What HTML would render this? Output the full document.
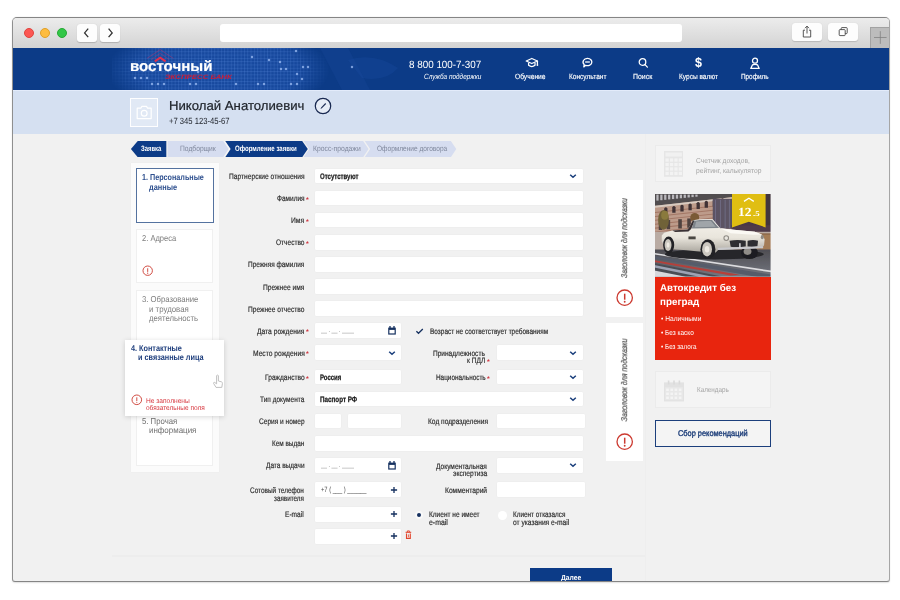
<!DOCTYPE html>
<html lang="ru">
<head>
<meta charset="utf-8">
<title>Восточный экспресс банк — Оформление заявки</title>
<style>
html,body{margin:0;padding:0;}
body{width:900px;height:600px;background:#fff;position:relative;overflow:hidden;font-family:'Liberation Sans',sans-serif;}
div,svg,span.t{position:absolute;box-sizing:border-box;}
span.t{white-space:nowrap;display:block;transform-origin:0 50%;text-rendering:geometricPrecision;}
.win{overflow:hidden;}
.inp{background:#fff;border-radius:1px;}
.card{background:#fff;}

</style>
</head>
<body>
<div class="win" style="left:12px;top:17px;width:878px;height:565px;border:1px solid #8f8f8f;border-top-color:#858585;border-bottom-color:#858585;border-right-color:#a6a6a6;border-radius:5px 5px 3px 3px;background:#f1f1f1;box-shadow:0 0.5px 1.5px rgba(0,0,0,.12);">
<div style="left:-13px;top:-18px;width:900px;height:600px;">
<div style="left:0.00px;top:18.00px;width:900.00px;height:30.00px;background:linear-gradient(#ececec,#e2e2e2 40%,#d3d3d3);"></div>
<div style="left:24.00px;top:28.00px;width:10.00px;height:10.00px;border-radius:50%;background:#fc5753;border:0.5px solid #e0443e;"></div>
<div style="left:40.30px;top:28.00px;width:10.00px;height:10.00px;border-radius:50%;background:#fdbc40;border:0.5px solid #e0a028;"></div>
<div style="left:56.70px;top:28.00px;width:10.00px;height:10.00px;border-radius:50%;background:#33c748;border:0.5px solid #27aa35;"></div>
<div style="left:76.70px;top:24.00px;width:20.00px;height:17.70px;background:#fdfdfd;border-radius:3px;box-shadow:0 0.5px 1px rgba(0,0,0,.18);"></div>
<div style="left:99.50px;top:24.00px;width:20.20px;height:17.70px;background:#fdfdfd;border-radius:3px;box-shadow:0 0.5px 1px rgba(0,0,0,.18);"></div>
<svg style="left:76.70px;top:24.00px;" width="20.00" height="17.70" viewBox="0 0 20 17.7"><path d="M11.2 4.6 L7.6 8.9 L11.2 13.2" fill="none" stroke="#333" stroke-width="1.3"/></svg>
<svg style="left:99.50px;top:24.00px;" width="20.20" height="17.70" viewBox="0 0 20.2 17.7"><path d="M8.6 4.6 L12.2 8.9 L8.6 13.2" fill="none" stroke="#333" stroke-width="1.3"/></svg>
<div style="left:219.70px;top:24.20px;width:462.80px;height:17.50px;background:#fff;border-radius:3px;"></div>
<div style="left:791.70px;top:23.00px;width:30.00px;height:17.70px;background:#fdfdfd;border-radius:3px;box-shadow:0 0.5px 1px rgba(0,0,0,.15);"></div>
<div style="left:828.30px;top:23.00px;width:30.00px;height:17.70px;background:#fdfdfd;border-radius:3px;box-shadow:0 0.5px 1px rgba(0,0,0,.15);"></div>
<svg style="left:791.70px;top:23.00px;" width="30.00" height="17.50" viewBox="0 0 30 17.5"><g fill="none" stroke="#444" stroke-width="0.9"><path d="M13 7.2 H11.3 V14 H18.7 V7.2 H17"/><path d="M15 10.5 V3.2 M13 5.2 L15 3.1 L17 5.2"/></g></svg>
<svg style="left:828.30px;top:23.00px;" width="30.00" height="17.50" viewBox="0 0 30 17.5"><g fill="none" stroke="#444" stroke-width="0.9"><rect x="11.2" y="6.6" width="6" height="6" rx="0.8"/><path d="M13.2 6.6 V5.4 Q13.2 4.6 14 4.6 H18.4 Q19.2 4.6 19.2 5.4 V9.8 Q19.2 10.6 18.4 10.6 H17.2"/></g></svg>
<div style="left:870.00px;top:27.20px;width:20.00px;height:21.30px;background:#bcbcbc;border:1px solid #a2a2a2;border-bottom:none;"></div>
<svg style="left:870.00px;top:27.20px;" width="20.00" height="20.80" viewBox="0 0 20 20.8"><path d="M10.3 4.2 V16.8 M4 10.5 H16.6" fill="none" stroke="#7e7e7e" stroke-width="0.75"/></svg>
<div style="left:0.00px;top:48.00px;width:900.00px;height:42.00px;background:#0c3b87;"></div>
<svg style="left:112.00px;top:48.00px;" width="300.00" height="42.00" viewBox="0 0 300 42"><defs>
<pattern id="hg" width="3.3" height="3.3" patternUnits="userSpaceOnUse"><path d="M0 0.5 H3.3 M0.5 0 V3.3" stroke="#5f8fe0" stroke-width="0.45" fill="none" opacity="0.5"/></pattern>
<radialGradient id="hr" cx="0.5" cy="0.5" r="0.5"><stop offset="0" stop-color="#fff" stop-opacity="1"/><stop offset="0.72" stop-color="#fff" stop-opacity="0.85"/><stop offset="1" stop-color="#fff" stop-opacity="0"/></radialGradient>
<mask id="hm"><ellipse cx="106" cy="22" rx="112" ry="46" fill="url(#hr)"/></mask>
<filter id="hb" x="-50%" y="-50%" width="200%" height="200%"><feGaussianBlur stdDeviation="0.45"/></filter>
</defs>
<g mask="url(#hm)"><rect x="0" y="0" width="230" height="42" fill="#194ba1"/><rect x="0" y="0" width="230" height="42" fill="url(#hg)"/></g>
<path d="M208 0 L236 0 L258 42 L230 42 Z" fill="#1a4a9c" opacity="0.3"/>
<path d="M236 12 Q262 4 286 20 Q274 34 250 30 Z" fill="#1d4fa4" opacity="0.28"/>
<g fill="#9dbdf5" opacity="0.75" filter="url(#hb)"><circle cx="23" cy="30" r="1.25"/><circle cx="29" cy="30" r="1.25"/><circle cx="35" cy="30" r="1.25"/><circle cx="40" cy="36" r="1.25"/><circle cx="46" cy="36" r="1.25"/><circle cx="52" cy="36" r="1.25"/><circle cx="78" cy="36" r="1.25"/><circle cx="84" cy="36" r="1.25"/><circle cx="124" cy="36" r="1.25"/><circle cx="86" cy="24" r="1.25"/><circle cx="140" cy="9" r="1.25"/><circle cx="146" cy="36" r="1.25"/><circle cx="152" cy="36" r="1.25"/><circle cx="157" cy="12" r="1.25"/><circle cx="168" cy="14" r="1.25"/><circle cx="169" cy="21" r="1.25"/><circle cx="174" cy="21" r="1.25"/><circle cx="179" cy="36" r="1.25"/><circle cx="185" cy="36" r="1.25"/><circle cx="184" cy="3" r="1.25"/><circle cx="185" cy="26" r="1.25"/><circle cx="190" cy="31" r="1.25"/><circle cx="191" cy="19" r="1.25"/><circle cx="196" cy="19" r="1.25"/><circle cx="240" cy="19" r="1.25"/></g></svg>
<span class="t" style="left:129.80px;top:57.30px;font-size:14.8px;line-height:20px;color:#fff;font-weight:bold;transform:scaleX(1.0177);-webkit-text-stroke:0.2px #fff;">восточный</span>
<span class="t" style="left:165.00px;top:73.30px;font-size:6.3px;line-height:9px;color:#cc1d38;font-weight:bold;font-style:italic;transform:scaleX(1.2410);">ЭКСПРЕСС БАНК</span>
<svg style="left:140.00px;top:48.00px;" width="42.00" height="16.00" viewBox="0 0 42 16"><g fill="none" stroke-linejoin="miter"><path d="M7 10.4 L20.2 1.6 L33.4 10.4" stroke="#c0306a" stroke-width="1" opacity="0.45"/><path d="M11 11.6 L20.2 5.4 L29.4 11.6" stroke="#c0306a" stroke-width="1" opacity="0.4"/><path d="M14.8 13.4 L20.2 9.7 L25.6 13.4" stroke="#e2304c" stroke-width="2.1"/></g></svg>
<span class="t" style="left:409.00px;top:58.30px;font-size:10.5px;line-height:14px;color:#fff;transform:scaleX(0.9380);">8 800 100-7-307</span>
<span class="t" style="left:424.00px;top:72.30px;font-size:7.6px;line-height:10px;color:#fff;font-style:italic;transform:scaleX(0.8477);">Служба поддержки</span>
<span class="t" style="left:515.30px;top:72.30px;font-size:7.6px;line-height:10px;color:#fff;transform:scaleX(0.8781);-webkit-text-stroke:0.15px #fff;">Обучение</span>
<span class="t" style="left:568.80px;top:72.30px;font-size:7.6px;line-height:10px;color:#fff;transform:scaleX(0.8626);-webkit-text-stroke:0.15px #fff;">Консультант</span>
<span class="t" style="left:633.00px;top:72.30px;font-size:7.6px;line-height:10px;color:#fff;transform:scaleX(0.9122);-webkit-text-stroke:0.15px #fff;">Поиск</span>
<span class="t" style="left:678.80px;top:72.30px;font-size:7.6px;line-height:10px;color:#fff;transform:scaleX(0.8601);-webkit-text-stroke:0.15px #fff;">Курсы валют</span>
<span class="t" style="left:740.50px;top:72.30px;font-size:7.6px;line-height:10px;color:#fff;transform:scaleX(0.8385);-webkit-text-stroke:0.15px #fff;">Профиль</span>
<svg style="left:524.50px;top:57.00px;" width="14.00" height="12.00" viewBox="0 0 14 12"><g fill="none" stroke="#fff" stroke-width="1.3" stroke-linejoin="round" stroke-linecap="round" stroke-width="1.45"><path d="M1.2 4 L6.8 1.5 L12.4 4 L6.8 6.5 Z"/><path d="M3.6 6.2 V8.3 Q6.8 10.9 10 8.3 V6.2"/><path d="M12.4 4.2 V7"/></g><circle cx="12.4" cy="8" r="0.9" fill="#fff"/></svg>
<svg style="left:580.50px;top:57.00px;" width="14.00" height="12.00" viewBox="0 0 14 12"><g fill="none" stroke="#fff" stroke-width="1.3" stroke-linejoin="round" stroke-linecap="round" stroke-width="1.45"><path d="M6.5 1.3 A4.3 3.7 0 1 1 4.6 8.3 L2.8 9.9 L3.2 7.5 A4.3 3.7 0 0 1 6.5 1.3 Z"/></g><path d="M4.6 5 H8.4" stroke="#fff" stroke-width="1.3" stroke-linecap="round" fill="none" opacity="0.85"/></svg>
<svg style="left:636.80px;top:57.00px;" width="14.00" height="12.00" viewBox="0 0 14 12"><g fill="none" stroke="#fff" stroke-width="1.3" stroke-linejoin="round" stroke-linecap="round" stroke-width="1.45"><circle cx="5.5" cy="5" r="3.3"/><path d="M8 7.6 L10.4 10.1"/></g></svg>
<span class="t" style="left:0.00px;top:54.30px;font-size:13.5px;line-height:18px;color:#fff;font-weight:bold;left:695.1px;transform:scaleX(0.93);">$</span>
<svg style="left:747.50px;top:56.60px;" width="14.00" height="12.50" viewBox="0 0 14 12.5"><g fill="none" stroke="#fff" stroke-width="1.3" stroke-linejoin="round" stroke-linecap="round" stroke-width="1.35"><circle cx="7" cy="3.7" r="2.5"/><path d="M2.8 11.4 L4.4 7.9 Q7 6.7 9.6 7.9 L11.2 11.4 Z"/></g></svg>
<div style="left:0.00px;top:90.00px;width:900.00px;height:43.60px;background:#d5e0f1;"></div>
<div style="left:0.00px;top:90.00px;width:900.00px;height:1.20px;background:#e3ebfa;"></div>
<div style="left:130.20px;top:98.20px;width:28.20px;height:28.90px;border:1.5px solid rgba(255,255,255,.95);background:rgba(255,255,255,.3);"></div>
<svg style="left:130.00px;top:98.30px;" width="28.40" height="28.70" viewBox="0 0 28.4 28.7"><g fill="none" stroke="#fff" stroke-width="1.2"><path d="M7.2 10.2 H10.8 L11.9 8.4 H16.5 L17.6 10.2 H21.2 V20.6 H7.2 Z" stroke-linejoin="round"/><circle cx="14.2" cy="15.2" r="2.9"/></g></svg>
<span class="t" style="left:169.00px;top:97.30px;font-size:13px;line-height:17px;color:#1b1f26;transform:scaleX(1.0128);-webkit-text-stroke:0.2px #1b1f26;">Николай Анатолиевич</span>
<span class="t" style="left:169.40px;top:115.30px;font-size:9px;line-height:12px;color:#23272f;transform:scaleX(0.8498);">+7 345 123-45-67</span>
<svg style="left:313.40px;top:95.50px;" width="20.00" height="20.00" viewBox="0 0 20 20"><circle cx="10" cy="10" r="7.7" fill="rgba(255,255,255,.4)" stroke="#1a2a52" stroke-width="1.25"/><path d="M7.5 13 L8.1 11.4 L12.3 7.1 L13.1 7.9 L8.9 12.2 Z" fill="#1a2a52"/></svg>
<svg style="left:125.00px;top:141.00px;" width="340.00" height="16.20" viewBox="0 0 340 16.2"><polygon points="5.80,8.10 12.60,0.00 41.20,0.00 41.20,16.20 12.60,16.20" fill="#0c3b87"/><polygon points="42.60,0.00 99.20,0.00 104.60,8.10 99.20,16.20 42.60,16.20" fill="#d6ddf0"/><polygon points="98.20,0.00 100.20,0.00 105.60,8.10 100.20,16.20 98.20,16.20 103.60,8.10" fill="#f6f6f6"/><polygon points="100.20,0.00 177.20,0.00 182.80,8.10 177.20,16.20 100.20,16.20 105.60,8.10" fill="#0c3b87"/><polygon points="178.60,0.00 238.20,0.00 243.60,8.10 238.20,16.20 178.60,16.20 184.20,8.10" fill="#d6ddf0"/><polygon points="239.80,0.00 326.00,0.00 331.40,8.10 326.00,16.20 239.80,16.20 245.20,8.10" fill="#d6ddf0"/></svg>
<span class="t" style="left:140.80px;top:143.30px;font-size:7.8px;line-height:11px;color:#fff;font-weight:bold;transform:scaleX(0.7608);">Заявка</span>
<span class="t" style="left:180.00px;top:143.30px;font-size:7.8px;line-height:11px;color:#7f879c;transform:scaleX(0.8597);">Подборщик</span>
<span class="t" style="left:235.00px;top:143.30px;font-size:7.8px;line-height:11px;color:#fff;font-weight:bold;transform:scaleX(0.7790);">Оформление заявки</span>
<span class="t" style="left:313.30px;top:143.30px;font-size:7.8px;line-height:11px;color:#7f879c;transform:scaleX(0.8705);">Кросс-продажи</span>
<span class="t" style="left:377.00px;top:143.30px;font-size:7.8px;line-height:11px;color:#7f879c;transform:scaleX(0.8404);">Оформление договора</span>
<div style="left:131.30px;top:163.00px;width:87.90px;height:308.60px;background:#fbfbfb;box-shadow:0 0 1px rgba(0,0,0,.06);"></div>
<div style="left:135.80px;top:167.60px;width:78.10px;height:55.10px;background:#fff;border:1px solid #54729f;"></div>
<span class="t" style="left:142.00px;top:171.30px;font-size:8.6px;line-height:12px;color:#2d4f8e;font-weight:bold;transform:scaleX(0.8373);">1. Персональные</span>
<span class="t" style="left:149.20px;top:181.30px;font-size:8.6px;line-height:12px;color:#2d4f8e;font-weight:bold;transform:scaleX(0.8554);">данные</span>
<div style="left:136.30px;top:228.70px;width:77.10px;height:54.70px;background:#fff;border:1px solid #f0f0f0;"></div>
<span class="t" style="left:141.80px;top:232.30px;font-size:8.6px;line-height:12px;color:#7d7d7d;transform:scaleX(0.8783);">2. Адреса</span>
<svg style="left:140.50px;top:264.00px;" width="13.40" height="13.40" viewBox="0 0 13.4 13.4"><circle cx="6.7" cy="6.7" r="4.7" fill="#fff" stroke="#cc3a30" stroke-width="0.9"/><path d="M6.7 4.256 v3.666" stroke="#cc3a30" stroke-width="0.9" fill="none"/><circle cx="6.7" cy="9.144" r="0.558" fill="#cc3a30"/></svg>
<div style="left:136.30px;top:289.70px;width:77.10px;height:54.70px;background:#fff;border:1px solid #f0f0f0;"></div>
<span class="t" style="left:141.80px;top:293.30px;font-size:8.6px;line-height:12px;color:#7d7d7d;transform:scaleX(0.8977);">3. Образование</span>
<span class="t" style="left:149.40px;top:303.30px;font-size:8.6px;line-height:12px;color:#7d7d7d;transform:scaleX(0.9146);">и трудовая</span>
<span class="t" style="left:149.00px;top:312.30px;font-size:8.6px;line-height:12px;color:#7d7d7d;transform:scaleX(0.8988);">деятельность</span>
<div style="left:136.30px;top:411.00px;width:77.10px;height:54.80px;background:#fff;border:1px solid #f0f0f0;"></div>
<span class="t" style="left:141.80px;top:415.30px;font-size:8.6px;line-height:12px;color:#6f6f6f;transform:scaleX(0.9022);">5. Прочая</span>
<span class="t" style="left:149.40px;top:424.30px;font-size:8.6px;line-height:12px;color:#6f6f6f;transform:scaleX(0.9249);">информация</span>
<div style="left:125.00px;top:339.50px;width:99.20px;height:76.30px;background:#fff;box-shadow:0 1px 5px rgba(0,0,0,.16);"></div>
<span class="t" style="left:130.80px;top:342.30px;font-size:8.5px;line-height:12px;color:#1d3d7c;font-weight:bold;transform:scaleX(0.8551);">4. Контактные</span>
<span class="t" style="left:138.40px;top:351.30px;font-size:8.5px;line-height:12px;color:#1d3d7c;font-weight:bold;transform:scaleX(0.8572);">и связанные лица</span>
<svg style="left:129.90px;top:392.80px;" width="13.60" height="13.60" viewBox="0 0 13.6 13.6"><circle cx="6.8" cy="6.8" r="4.8" fill="#fff" stroke="#cc3a30" stroke-width="0.9"/><path d="M6.8 4.304 v3.744" stroke="#cc3a30" stroke-width="0.9" fill="none"/><circle cx="6.8" cy="9.296" r="0.558" fill="#cc3a30"/></svg>
<span class="t" style="left:145.80px;top:397.30px;font-size:6.9px;line-height:9px;color:#d6323a;transform:scaleX(0.9616);">Не заполнены</span>
<span class="t" style="left:145.80px;top:404.30px;font-size:6.9px;line-height:9px;color:#d6323a;transform:scaleX(0.9458);">обязательные поля</span>
<svg style="left:211.00px;top:374.00px;" width="14.00" height="16.00" viewBox="0 0 14 16"><path d="M5.6 1.6 Q6.6 0.6 7.4 1.6 V7 L10.4 7.8 Q11.6 8.2 11.4 9.6 L10.8 13.4 H5 L2.6 9.4 Q2.4 8.2 3.6 8.4 L5.6 9.8 Z" fill="#fff" stroke="#b9b9b9" stroke-width="0.9" stroke-linejoin="round"/></svg>
<span class="t" style="left:228.70px;top:171.30px;font-size:8px;line-height:11px;color:#2c2c2c;transform:scaleX(0.8309);-webkit-text-stroke:0.18px #2c2c2c;">Партнерские отношения</span>
<span class="t" style="left:276.70px;top:193.30px;font-size:8px;line-height:11px;color:#2c2c2c;transform:scaleX(0.8125);-webkit-text-stroke:0.18px #2c2c2c;">Фамилия</span>
<span class="t" style="left:306.10px;top:196.30px;font-size:7px;line-height:10px;color:#cf2f3a;font-weight:bold;transform:scaleX(1.0005);">*</span>
<span class="t" style="left:291.20px;top:215.30px;font-size:8px;line-height:11px;color:#2c2c2c;transform:scaleX(0.8401);-webkit-text-stroke:0.18px #2c2c2c;">Имя</span>
<span class="t" style="left:306.10px;top:218.30px;font-size:7px;line-height:10px;color:#cf2f3a;font-weight:bold;transform:scaleX(1.0005);">*</span>
<span class="t" style="left:275.80px;top:237.30px;font-size:8px;line-height:11px;color:#2c2c2c;transform:scaleX(0.8194);-webkit-text-stroke:0.18px #2c2c2c;">Отчество</span>
<span class="t" style="left:306.10px;top:240.30px;font-size:7px;line-height:10px;color:#cf2f3a;font-weight:bold;transform:scaleX(1.0005);">*</span>
<span class="t" style="left:248.00px;top:259.30px;font-size:8px;line-height:11px;color:#2c2c2c;transform:scaleX(0.8079);-webkit-text-stroke:0.18px #2c2c2c;">Прежняя фамилия</span>
<span class="t" style="left:263.00px;top:282.30px;font-size:8px;line-height:11px;color:#2c2c2c;transform:scaleX(0.8302);-webkit-text-stroke:0.18px #2c2c2c;">Прежнее имя</span>
<span class="t" style="left:248.00px;top:304.30px;font-size:8px;line-height:11px;color:#2c2c2c;transform:scaleX(0.8245);-webkit-text-stroke:0.18px #2c2c2c;">Прежнее отчество</span>
<span class="t" style="left:257.00px;top:326.30px;font-size:8px;line-height:11px;color:#2c2c2c;transform:scaleX(0.8381);-webkit-text-stroke:0.18px #2c2c2c;">Дата рождения</span>
<span class="t" style="left:306.10px;top:328.30px;font-size:7px;line-height:10px;color:#cf2f3a;font-weight:bold;transform:scaleX(1.0005);">*</span>
<span class="t" style="left:252.50px;top:348.30px;font-size:8px;line-height:11px;color:#2c2c2c;transform:scaleX(0.8361);-webkit-text-stroke:0.18px #2c2c2c;">Место рождения</span>
<span class="t" style="left:306.10px;top:350.30px;font-size:7px;line-height:10px;color:#cf2f3a;font-weight:bold;transform:scaleX(1.0005);">*</span>
<span class="t" style="left:264.70px;top:372.30px;font-size:8px;line-height:11px;color:#2c2c2c;transform:scaleX(0.8258);-webkit-text-stroke:0.18px #2c2c2c;">Гражданство</span>
<span class="t" style="left:306.10px;top:375.30px;font-size:7px;line-height:10px;color:#cf2f3a;font-weight:bold;transform:scaleX(1.0005);">*</span>
<span class="t" style="left:260.00px;top:394.30px;font-size:8px;line-height:11px;color:#2c2c2c;transform:scaleX(0.8117);-webkit-text-stroke:0.18px #2c2c2c;">Тип документа</span>
<span class="t" style="left:258.70px;top:416.30px;font-size:8px;line-height:11px;color:#2c2c2c;transform:scaleX(0.8193);-webkit-text-stroke:0.18px #2c2c2c;">Серия и номер</span>
<span class="t" style="left:272.00px;top:438.30px;font-size:8px;line-height:11px;color:#2c2c2c;transform:scaleX(0.8000);-webkit-text-stroke:0.18px #2c2c2c;">Кем выдан</span>
<span class="t" style="left:265.80px;top:460.30px;font-size:8px;line-height:11px;color:#2c2c2c;transform:scaleX(0.8103);-webkit-text-stroke:0.18px #2c2c2c;">Дата выдачи</span>
<span class="t" style="left:249.70px;top:485.30px;font-size:8px;line-height:11px;color:#2c2c2c;transform:scaleX(0.8034);-webkit-text-stroke:0.18px #2c2c2c;">Сотовый телефон</span>
<span class="t" style="left:273.70px;top:493.30px;font-size:8px;line-height:11px;color:#2c2c2c;transform:scaleX(0.7881);-webkit-text-stroke:0.18px #2c2c2c;">заявителя</span>
<span class="t" style="left:285.00px;top:509.30px;font-size:8px;line-height:11px;color:#2c2c2c;transform:scaleX(0.8204);-webkit-text-stroke:0.18px #2c2c2c;">E-mail</span>
<div style="left:315.30px;top:168.60px;width:267.90px;height:14.70px;background:#fff;border-radius:1.2px;box-shadow:0 0 0 0.5px rgba(0,0,0,.025);"></div>
<div style="left:315.30px;top:190.70px;width:267.90px;height:14.70px;background:#fff;border-radius:1.2px;box-shadow:0 0 0 0.5px rgba(0,0,0,.025);"></div>
<div style="left:315.30px;top:212.90px;width:267.90px;height:14.60px;background:#fff;border-radius:1.2px;box-shadow:0 0 0 0.5px rgba(0,0,0,.025);"></div>
<div style="left:315.30px;top:235.00px;width:267.90px;height:14.60px;background:#fff;border-radius:1.2px;box-shadow:0 0 0 0.5px rgba(0,0,0,.025);"></div>
<div style="left:315.30px;top:257.10px;width:267.90px;height:14.60px;background:#fff;border-radius:1.2px;box-shadow:0 0 0 0.5px rgba(0,0,0,.025);"></div>
<div style="left:315.30px;top:279.20px;width:267.90px;height:14.60px;background:#fff;border-radius:1.2px;box-shadow:0 0 0 0.5px rgba(0,0,0,.025);"></div>
<div style="left:315.30px;top:301.30px;width:267.90px;height:14.60px;background:#fff;border-radius:1.2px;box-shadow:0 0 0 0.5px rgba(0,0,0,.025);"></div>
<div style="left:315.30px;top:391.60px;width:267.90px;height:14.70px;background:#fff;border-radius:1.2px;box-shadow:0 0 0 0.5px rgba(0,0,0,.025);"></div>
<div style="left:315.30px;top:436.00px;width:267.90px;height:14.70px;background:#fff;border-radius:1.2px;box-shadow:0 0 0 0.5px rgba(0,0,0,.025);"></div>
<div style="left:315.30px;top:323.30px;width:86.00px;height:14.70px;background:#fff;border-radius:1.2px;box-shadow:0 0 0 0.5px rgba(0,0,0,.025);"></div>
<div style="left:315.30px;top:345.30px;width:86.00px;height:14.70px;background:#fff;border-radius:1.2px;box-shadow:0 0 0 0.5px rgba(0,0,0,.025);"></div>
<div style="left:315.30px;top:369.70px;width:86.00px;height:14.60px;background:#fff;border-radius:1.2px;box-shadow:0 0 0 0.5px rgba(0,0,0,.025);"></div>
<div style="left:315.30px;top:458.00px;width:86.00px;height:14.60px;background:#fff;border-radius:1.2px;box-shadow:0 0 0 0.5px rgba(0,0,0,.025);"></div>
<div style="left:315.30px;top:482.30px;width:86.00px;height:14.80px;background:#fff;border-radius:1.2px;box-shadow:0 0 0 0.5px rgba(0,0,0,.025);"></div>
<div style="left:315.30px;top:507.00px;width:86.00px;height:14.70px;background:#fff;border-radius:1.2px;box-shadow:0 0 0 0.5px rgba(0,0,0,.025);"></div>
<div style="left:315.30px;top:529.00px;width:86.00px;height:14.70px;background:#fff;border-radius:1.2px;box-shadow:0 0 0 0.5px rgba(0,0,0,.025);"></div>
<div style="left:315.30px;top:413.80px;width:25.50px;height:14.60px;background:#fff;border-radius:1.2px;box-shadow:0 0 0 0.5px rgba(0,0,0,.025);"></div>
<div style="left:348.30px;top:413.80px;width:53.00px;height:14.60px;background:#fff;border-radius:1.2px;box-shadow:0 0 0 0.5px rgba(0,0,0,.025);"></div>
<div style="left:496.60px;top:345.30px;width:86.00px;height:14.70px;background:#fff;border-radius:1.2px;box-shadow:0 0 0 0.5px rgba(0,0,0,.025);"></div>
<div style="left:496.60px;top:369.70px;width:86.00px;height:14.60px;background:#fff;border-radius:1.2px;box-shadow:0 0 0 0.5px rgba(0,0,0,.025);"></div>
<div style="left:496.60px;top:458.00px;width:86.00px;height:14.60px;background:#fff;border-radius:1.2px;box-shadow:0 0 0 0.5px rgba(0,0,0,.025);"></div>
<div style="left:496.60px;top:413.80px;width:88.00px;height:14.60px;background:#fff;border-radius:1.2px;box-shadow:0 0 0 0.5px rgba(0,0,0,.025);"></div>
<div style="left:496.60px;top:482.30px;width:88.00px;height:14.80px;background:#fff;border-radius:1.2px;box-shadow:0 0 0 0.5px rgba(0,0,0,.025);"></div>
<svg style="left:567.60px;top:172.10px;" width="10.00" height="8.00" viewBox="0 0 10 8"><path d="M2.2 2.7 L5 5.3 L7.8 2.7" fill="none" stroke="#1b3f7c" stroke-width="1.5"/></svg>
<svg style="left:567.60px;top:395.10px;" width="10.00" height="8.00" viewBox="0 0 10 8"><path d="M2.2 2.7 L5 5.3 L7.8 2.7" fill="none" stroke="#1b3f7c" stroke-width="1.5"/></svg>
<svg style="left:567.60px;top:348.80px;" width="10.00" height="8.00" viewBox="0 0 10 8"><path d="M2.2 2.7 L5 5.3 L7.8 2.7" fill="none" stroke="#1b3f7c" stroke-width="1.5"/></svg>
<svg style="left:567.60px;top:373.15px;" width="10.00" height="8.00" viewBox="0 0 10 8"><path d="M2.2 2.7 L5 5.3 L7.8 2.7" fill="none" stroke="#1b3f7c" stroke-width="1.5"/></svg>
<svg style="left:567.60px;top:461.15px;" width="10.00" height="8.00" viewBox="0 0 10 8"><path d="M2.2 2.7 L5 5.3 L7.8 2.7" fill="none" stroke="#1b3f7c" stroke-width="1.5"/></svg>
<svg style="left:387.00px;top:348.80px;" width="10.00" height="8.00" viewBox="0 0 10 8"><path d="M2.2 2.7 L5 5.3 L7.8 2.7" fill="none" stroke="#1b3f7c" stroke-width="1.5"/></svg>
<svg style="left:387.00px;top:324.90px;" width="10.00" height="11.00" viewBox="0 0 10 11"><path d="M1.2 2.6 H8.8 V9.6 H1.2 Z" fill="#15305f"/><rect x="2.4" y="4.9" width="5.2" height="3.5" fill="#fff"/><path d="M3 1 V3 M7 1 V3" stroke="#15305f" stroke-width="1.3"/></svg>
<svg style="left:387.00px;top:459.55px;" width="10.00" height="11.00" viewBox="0 0 10 11"><path d="M1.2 2.6 H8.8 V9.6 H1.2 Z" fill="#15305f"/><rect x="2.4" y="4.9" width="5.2" height="3.5" fill="#fff"/><path d="M3 1 V3 M7 1 V3" stroke="#15305f" stroke-width="1.3"/></svg>
<svg style="left:388.80px;top:484.55px;" width="10.00" height="10.00" viewBox="0 0 10 10"><path d="M5 1.9 V8.1 M1.9 5 H8.1" fill="none" stroke="#15305f" stroke-width="1.3"/></svg>
<svg style="left:388.80px;top:509.20px;" width="10.00" height="10.00" viewBox="0 0 10 10"><path d="M5 1.9 V8.1 M1.9 5 H8.1" fill="none" stroke="#15305f" stroke-width="1.3"/></svg>
<svg style="left:388.80px;top:531.20px;" width="10.00" height="10.00" viewBox="0 0 10 10"><path d="M5 1.9 V8.1 M1.9 5 H8.1" fill="none" stroke="#15305f" stroke-width="1.3"/></svg>
<span class="t" style="left:320.00px;top:171.30px;font-size:8px;line-height:11px;color:#1a1a1a;font-weight:bold;transform:scaleX(0.7539);-webkit-text-stroke:0.25px #1a1a1a;">Отсутствуют</span>
<span class="t" style="left:319.60px;top:372.30px;font-size:8px;line-height:11px;color:#1a1a1a;font-weight:bold;transform:scaleX(0.7463);-webkit-text-stroke:0.25px #1a1a1a;">Россия</span>
<span class="t" style="left:320.40px;top:394.30px;font-size:8px;line-height:11px;color:#1a1a1a;font-weight:bold;transform:scaleX(0.7855);-webkit-text-stroke:0.25px #1a1a1a;">Паспорт РФ</span>
<span class="t" style="left:320.50px;top:326.30px;font-size:6.4px;line-height:9px;color:#7a7a7a;transform:scaleX(0.8416);">__ . __ . ____</span>
<span class="t" style="left:320.50px;top:461.30px;font-size:6.4px;line-height:9px;color:#7a7a7a;transform:scaleX(0.8416);">__ . __ . ____</span>
<span class="t" style="left:321.30px;top:485.30px;font-size:7.6px;line-height:10px;color:#4a4a4a;transform:scaleX(0.7562);">+7 ( ___ ) ______</span>
<svg style="left:405.40px;top:530.40px;" width="7.00" height="9.40" viewBox="0 0 7 9.4"><g fill="none" stroke="#e2452c"><path d="M0.6 2.3 H6.2" stroke-width="1.1"/><path d="M2.4 2 V0.9 H4.4 V2" stroke-width="0.9"/><path d="M1.5 3.4 V8.4 H5.3 V3.4" stroke-width="1.1"/><path d="M3.4 4.4 V7.2" stroke-width="0.8"/></g></svg>
<svg style="left:414.00px;top:326.00px;" width="11.00" height="10.00" viewBox="0 0 11 10"><path d="M2.4 5.2 L4.5 7.3 L8.8 3" fill="none" stroke="#15305f" stroke-width="1.3"/></svg>
<span class="t" style="left:430.30px;top:326.30px;font-size:8px;line-height:11px;color:#2c2c2c;transform:scaleX(0.8079);-webkit-text-stroke:0.18px #2c2c2c;">Возраст не соответствует требованиям</span>
<span class="t" style="left:432.60px;top:348.30px;font-size:8px;line-height:11px;color:#2c2c2c;transform:scaleX(0.8186);-webkit-text-stroke:0.18px #2c2c2c;">Принадлежность</span>
<span class="t" style="left:466.60px;top:355.30px;font-size:8px;line-height:11px;color:#2c2c2c;transform:scaleX(0.8220);-webkit-text-stroke:0.18px #2c2c2c;">к ПДЛ</span>
<span class="t" style="left:486.70px;top:358.30px;font-size:7px;line-height:10px;color:#cf2f3a;font-weight:bold;transform:scaleX(1.0005);">*</span>
<span class="t" style="left:435.60px;top:372.30px;font-size:8px;line-height:11px;color:#2c2c2c;transform:scaleX(0.7998);-webkit-text-stroke:0.18px #2c2c2c;">Национальность</span>
<span class="t" style="left:487.30px;top:375.30px;font-size:7px;line-height:10px;color:#cf2f3a;font-weight:bold;transform:scaleX(1.0005);">*</span>
<span class="t" style="left:427.50px;top:416.30px;font-size:8px;line-height:11px;color:#2c2c2c;transform:scaleX(0.8265);-webkit-text-stroke:0.18px #2c2c2c;">Код подразделения</span>
<span class="t" style="left:436.30px;top:461.30px;font-size:8px;line-height:11px;color:#2c2c2c;transform:scaleX(0.8224);-webkit-text-stroke:0.18px #2c2c2c;">Документальная</span>
<span class="t" style="left:453.00px;top:468.30px;font-size:8px;line-height:11px;color:#2c2c2c;transform:scaleX(0.8345);-webkit-text-stroke:0.18px #2c2c2c;">экспертиза</span>
<span class="t" style="left:445.30px;top:485.30px;font-size:8px;line-height:11px;color:#2c2c2c;transform:scaleX(0.8355);-webkit-text-stroke:0.18px #2c2c2c;">Комментарий</span>
<div style="left:414.60px;top:511.30px;width:8.00px;height:8.00px;border-radius:50%;background:#f9f9f9;"></div>
<div style="left:416.50px;top:513.10px;width:4.40px;height:4.40px;border-radius:50%;background:#15305f;"></div>
<span class="t" style="left:429.20px;top:509.30px;font-size:8px;line-height:11px;color:#2c2c2c;transform:scaleX(0.8174);-webkit-text-stroke:0.18px #2c2c2c;">Клиент не имеет</span>
<span class="t" style="left:429.20px;top:517.30px;font-size:8px;line-height:11px;color:#2c2c2c;transform:scaleX(0.8631);-webkit-text-stroke:0.18px #2c2c2c;">e-mail</span>
<div style="left:498.00px;top:511.00px;width:8.80px;height:8.80px;border-radius:50%;background:#fff;"></div>
<span class="t" style="left:513.20px;top:509.30px;font-size:8px;line-height:11px;color:#2c2c2c;transform:scaleX(0.7983);-webkit-text-stroke:0.18px #2c2c2c;">Клиент отказался</span>
<span class="t" style="left:513.20px;top:517.30px;font-size:8px;line-height:11px;color:#2c2c2c;transform:scaleX(0.8320);-webkit-text-stroke:0.18px #2c2c2c;">от указания e-mail</span>
<div style="left:112.00px;top:554.60px;width:533.00px;height:2.00px;background:#ededed;"></div>
<div style="left:529.90px;top:567.50px;width:82.40px;height:32.50px;background:#0c3b87;"></div>
<span class="t" style="left:561.00px;top:573.30px;font-size:7.4px;line-height:10px;color:#fff;font-weight:bold;transform:scaleX(0.9188);">Далее</span>
<div style="left:606.10px;top:180.00px;width:37.10px;height:137.30px;background:#fff;"></div>
<span class="t" style="left:564.40px;top:232.60px;width:120.00px;height:10px;line-height:10px;font-size:8.4px;font-style:italic;color:#5a5a5a;-webkit-text-stroke:0.25px #5a5a5a;text-rendering:geometricPrecision;will-change:transform;text-align:center;transform-origin:50% 50%;transform:rotate(-90deg) scaleX(0.815);">Заголовок для подсказки</span>
<svg style="left:614.90px;top:287.60px;" width="19.40" height="19.40" viewBox="0 0 19.4 19.4"><circle cx="9.7" cy="9.7" r="7.7" fill="#fff" stroke="#cc3a30" stroke-width="1.3"/><path d="M9.7 5.696 v6.006" stroke="#cc3a30" stroke-width="1.5" fill="none"/><circle cx="9.7" cy="13.704" r="0.93" fill="#cc3a30"/></svg>
<div style="left:606.10px;top:323.30px;width:37.10px;height:137.40px;background:#fff;"></div>
<span class="t" style="left:564.40px;top:375.10px;width:120.00px;height:10px;line-height:10px;font-size:8.4px;font-style:italic;color:#5a5a5a;-webkit-text-stroke:0.25px #5a5a5a;text-rendering:geometricPrecision;will-change:transform;text-align:center;transform-origin:50% 50%;transform:rotate(-90deg) scaleX(0.846);">Заголовок для подсказки</span>
<svg style="left:614.90px;top:431.50px;" width="19.40" height="19.40" viewBox="0 0 19.4 19.4"><circle cx="9.7" cy="9.7" r="7.7" fill="#fff" stroke="#cc3a30" stroke-width="1.3"/><path d="M9.7 5.696 v6.006" stroke="#cc3a30" stroke-width="1.5" fill="none"/><circle cx="9.7" cy="13.704" r="0.93" fill="#cc3a30"/></svg>
<div style="left:645.00px;top:133.60px;width:1.00px;height:466.40px;background:#eeeeee;"></div>
<div style="left:655.30px;top:145.00px;width:115.90px;height:36.80px;background:#f4f4f4;border:1px solid #ebebeb;"></div>
<svg style="left:664.00px;top:151.00px;" width="19.40" height="25.80" viewBox="0 0 19.4 25.8"><rect x="0" y="0" width="19.4" height="25.8" fill="#e6e6e6"/><rect x="1.5" y="1.6" width="16.4" height="4" fill="#f1f1f1"/><rect x="1.5" y="7.4" width="3.3" height="3.3" fill="#f3f3f3"/><rect x="1.5" y="11.85" width="3.3" height="3.3" fill="#f3f3f3"/><rect x="1.5" y="16.3" width="3.3" height="3.3" fill="#f3f3f3"/><rect x="1.5" y="20.75" width="3.3" height="3.3" fill="#f3f3f3"/><rect x="5.9" y="7.4" width="3.3" height="3.3" fill="#f3f3f3"/><rect x="5.9" y="11.85" width="3.3" height="3.3" fill="#f3f3f3"/><rect x="5.9" y="16.3" width="3.3" height="3.3" fill="#f3f3f3"/><rect x="5.9" y="20.75" width="3.3" height="3.3" fill="#f3f3f3"/><rect x="10.3" y="7.4" width="3.3" height="3.3" fill="#f3f3f3"/><rect x="10.3" y="11.85" width="3.3" height="3.3" fill="#f3f3f3"/><rect x="10.3" y="16.3" width="3.3" height="3.3" fill="#f3f3f3"/><rect x="10.3" y="20.75" width="3.3" height="3.3" fill="#f3f3f3"/><rect x="14.7" y="7.4" width="3.3" height="3.3" fill="#f3f3f3"/><rect x="14.7" y="11.85" width="3.3" height="3.3" fill="#f3f3f3"/><rect x="14.7" y="16.3" width="3.3" height="3.3" fill="#f3f3f3"/><rect x="14.7" y="20.75" width="3.3" height="3.3" fill="#f3f3f3"/></svg>
<span class="t" style="left:696.20px;top:156.30px;font-size:7.2px;line-height:10px;color:#a4a4a4;transform:scaleX(0.9231);">Счетчик доходов,</span>
<span class="t" style="left:696.20px;top:166.30px;font-size:7.2px;line-height:10px;color:#a4a4a4;transform:scaleX(0.9314);">рейтинг, калькулятор</span>
<svg style="left:655.30px;top:194.20px;" width="115.60" height="82.80" viewBox="35 28 770.7 552"><defs>
<filter id="bl" x="-5%" y="-5%" width="110%" height="110%"><feGaussianBlur stdDeviation="2.6"/></filter>
<linearGradient id="cb" x1="0" y1="0" x2="0" y2="1"><stop offset="0" stop-color="#f6f3ec"/><stop offset="0.55" stop-color="#e9e5dc"/><stop offset="1" stop-color="#aaa69e"/></linearGradient>
<linearGradient id="rd" x1="0" y1="0" x2="0" y2="1"><stop offset="0" stop-color="#4e4d52"/><stop offset="1" stop-color="#777a84"/></linearGradient>
<clipPath id="bc"><rect x="35" y="28" width="770.7" height="552"/></clipPath>
</defs>
<g clip-path="url(#bc)"><g filter="url(#bl)">
<rect x="20" y="10" width="800" height="590" fill="#bd9b8a"/>
<polygon points="20,150.0 560,92.0 560,98.0 20,157.0" fill="#8d5846" opacity="0.55"/><polygon points="20,176.0 560,118.0 560,124.0 20,183.0" fill="#8d5846" opacity="0.55"/><polygon points="20,202.0 560,144.0 560,150.0 20,209.0" fill="#8d5846" opacity="0.55"/><polygon points="20,228.0 560,170.0 560,176.0 20,235.0" fill="#8d5846" opacity="0.55"/><polygon points="20,254.0 560,196.0 560,202.0 20,261.0" fill="#8d5846" opacity="0.55"/><polygon points="20,280.0 560,222.0 560,228.0 20,287.0" fill="#8d5846" opacity="0.55"/>
<polygon points="20,10 560,10 560,48 20,108" fill="#514e50"/>
<rect x="44" y="32" width="15" height="40.0" fill="#d4d3d8" opacity="0.8"/><rect x="70" y="32" width="15" height="37.4" fill="#d4d3d8" opacity="0.8"/><rect x="96" y="32" width="15" height="34.8" fill="#d4d3d8" opacity="0.8"/><rect x="122" y="32" width="15" height="32.2" fill="#d4d3d8" opacity="0.8"/><rect x="148" y="32" width="15" height="29.6" fill="#d4d3d8" opacity="0.8"/><rect x="174" y="32" width="15" height="27.0" fill="#d4d3d8" opacity="0.8"/><rect x="200" y="32" width="15" height="24.4" fill="#d4d3d8" opacity="0.8"/><rect x="226" y="32" width="15" height="21.8" fill="#d4d3d8" opacity="0.8"/><rect x="252" y="32" width="15" height="19.2" fill="#d4d3d8" opacity="0.8"/><rect x="278" y="32" width="15" height="16.6" fill="#d4d3d8" opacity="0.8"/><rect x="304" y="32" width="15" height="14.0" fill="#d4d3d8" opacity="0.8"/>
<polygon points="20,108 560,48 560,60 20,122" fill="#ddd3ca" opacity="0.85"/>
<path d="M96 162.0 v-38 q11 -16 22 0 v38 z" fill="#3f3336"/><path d="M150 153.5 v-38 q11 -16 22 0 v38 z" fill="#3f3336"/><path d="M204 145.0 v-38 q11 -16 22 0 v38 z" fill="#3f3336"/><path d="M258 136.5 v-38 q11 -16 22 0 v38 z" fill="#3f3336"/><path d="M312 128.0 v-38 q11 -16 22 0 v38 z" fill="#3f3336"/><path d="M366 119.5 v-38 q11 -16 22 0 v38 z" fill="#3f3336"/><path d="M420 111.0 v-38 q11 -16 22 0 v38 z" fill="#3f3336"/><path d="M474 102.5 v-38 q11 -16 22 0 v38 z" fill="#3f3336"/>
<rect x="60" y="206.0" width="24" height="62" fill="#50423f"/><rect x="112" y="201.0" width="24" height="62" fill="#50423f"/><rect x="190" y="196.0" width="24" height="62" fill="#50423f"/><rect x="250" y="191.0" width="24" height="62" fill="#50423f"/><rect x="300" y="186.0" width="24" height="62" fill="#50423f"/>
<rect x="420" y="60" width="130" height="200" fill="#5b5363"/>
<rect x="436" y="66" width="5" height="190" fill="#8a8cae" opacity="0.55"/><rect x="468" y="66" width="5" height="190" fill="#8a8cae" opacity="0.55"/><rect x="500" y="66" width="5" height="190" fill="#8a8cae" opacity="0.55"/><rect x="528" y="66" width="5" height="190" fill="#8a8cae" opacity="0.55"/>
<rect x="548" y="10" width="280" height="240" fill="#4a3946"/>
<rect x="770" y="10" width="50" height="300" fill="#43353c"/>
<rect x="545" y="236" width="280" height="64" fill="#503a48"/>
<ellipse cx="92" cy="200" rx="36" ry="66" fill="#6f6238"/>
<ellipse cx="100" cy="170" rx="24" ry="30" fill="#8a7a3e"/>
<ellipse cx="330" cy="235" rx="52" ry="40" fill="#6a3a2c"/>
<ellipse cx="300" cy="185" rx="30" ry="30" fill="#7a5a36"/>
<rect x="20" y="280" width="800" height="130" fill="#b9aba3"/>
<rect x="560" y="290" width="260" height="110" fill="#8d6a4c"/>
<rect x="740" y="300" width="80" height="100" fill="#a47c56"/>
<!-- road -->
<rect x="20" y="398" width="800" height="200" fill="url(#rd)"/>
<polygon points="20,420 820,540 820,552 20,430" fill="#dcdcdf"/>
<polygon points="20,440 820,566 820,600 20,456" fill="#565b6a"/>
<polygon points="20,468 600,566 540,572 20,480" fill="#b5403a"/>
<polygon points="20,486 480,578 20,578" fill="#4a4d55"/>
<polygon points="20,500 420,580 330,580 20,516" fill="#9da3b4"/>
<polygon points="20,536 240,580 20,580" fill="#d7d8dc"/>
<!-- shadow -->
<ellipse cx="430" cy="430" rx="330" ry="34" fill="#26262a"/>
<!-- far wheel -->
<ellipse cx="665" cy="418" rx="56" ry="44" fill="#1d1d20"/>
<ellipse cx="652" cy="412" rx="26" ry="22" fill="#8f8c88"/>
<!-- car body -->
<path d="M80 305 L96 286 L150 272 L252 264 L262 252 L288 203 Q350 192 420 197 L470 256 L560 266 L700 280 L748 298 L766 330 L762 372 L744 388 L456 402 L440 418 L330 412 L170 396 L100 380 L80 345 Z" fill="url(#cb)"/>
<path d="M150 272 L252 264 L262 252 L288 203 L300 206 L276 262 L258 278 L170 282 Z" fill="#3a3234"/>
<path d="M296 206 Q350 196 416 201 L462 254 L280 258 Z" fill="#7d8389"/>
<path d="M310 212 Q350 206 408 208 L440 246 L300 250 Z" fill="#a9aeb2" opacity="0.8"/>
<rect x="258" y="311" width="48" height="19" fill="#4a4642"/>
<path d="M470 256 L560 266 L700 280 L748 298 L690 300 L540 290 Z" fill="#fbf9f4"/>
<!-- grille -->
<path d="M532 340 Q585 328 640 340 L640 378 Q585 388 540 380 Z" fill="#2f2f33"/>
<path d="M652 340 Q690 330 722 340 L718 376 Q685 384 652 378 Z" fill="#2f2f33"/>
<circle cx="510" cy="322" r="19" fill="#8e8a84"/><circle cx="510" cy="322" r="12" fill="#e9e6df"/>
<ellipse cx="750" cy="316" rx="10" ry="14" fill="#8e8a84"/>
<path d="M452 386 L756 376 L756 390 L456 402 Z" fill="#c9c9cc"/>
<rect x="596" y="356" width="10" height="34" fill="#d9d9dc"/>
<!-- wheels -->
<ellipse cx="126" cy="368" rx="37" ry="56" fill="#222225"/>
<ellipse cx="122" cy="368" rx="23" ry="40" fill="#cbc7bf"/>
<ellipse cx="122" cy="368" rx="10" ry="18" fill="#eeeae2"/>
<ellipse cx="388" cy="396" rx="50" ry="66" fill="#222225"/>
<ellipse cx="382" cy="396" rx="33" ry="48" fill="#cbc7bf"/>
<ellipse cx="382" cy="396" rx="15" ry="22" fill="#eeeae2"/>
</g></g>
</svg>
<div style="left:655.30px;top:276.70px;width:115.60px;height:83.10px;background:#e8250e;"></div>
<svg style="left:732.20px;top:194.20px;" width="33.60" height="34.00" viewBox="0 0 33.6 34"><path d="M0 0 H33.6 V33.4 L16.8 27.8 L0 33.4 Z" fill="#e0be12"/><path d="M12 7.4 L16.9 4.2 L21.8 7.4" fill="none" stroke="#fff" stroke-width="1.3"/></svg>
<span class="t" style="left:738.40px;top:204.30px;font-size:12.4px;line-height:17px;color:#fff;font-weight:bold;font-family:'Liberation Serif',serif;transform:scaleX(1.0976);">12</span>
<span class="t" style="left:752.60px;top:209.30px;font-size:7.4px;line-height:10px;color:#fff;font-weight:bold;font-family:'Liberation Serif',serif;transform:scaleX(1.1899);">.5</span>
<span class="t" style="left:660.40px;top:282.30px;font-size:10px;line-height:13px;color:#fff;font-weight:bold;transform:scaleX(0.9785);">Автокредит без</span>
<span class="t" style="left:660.40px;top:296.30px;font-size:10px;line-height:13px;color:#fff;font-weight:bold;transform:scaleX(0.9823);">преград</span>
<span class="t" style="left:660.60px;top:314.30px;font-size:7.3px;line-height:10px;color:#fff;transform:scaleX(0.9095);">• Наличными</span>
<span class="t" style="left:660.60px;top:328.30px;font-size:7.3px;line-height:10px;color:#fff;transform:scaleX(0.8854);">• Без каско</span>
<span class="t" style="left:660.60px;top:342.30px;font-size:7.3px;line-height:10px;color:#fff;transform:scaleX(0.8680);">• Без залога</span>
<div style="left:655.30px;top:370.80px;width:115.90px;height:37.50px;background:#f4f4f4;border:1px solid #ebebeb;"></div>
<svg style="left:664.00px;top:379.60px;" width="20.00" height="22.00" viewBox="0 0 20 22"><rect x="0" y="2.4" width="20" height="19" fill="#e2e2e2"/><rect x="1.2" y="7.2" width="17.6" height="13" fill="#e8e8e8"/><rect x="2.2" y="8.6" width="2.6" height="2.4" fill="#f4f4f4"/><rect x="2.2" y="12.6" width="2.6" height="2.4" fill="#f4f4f4"/><rect x="2.2" y="16.6" width="2.6" height="2.4" fill="#f4f4f4"/><rect x="6.4" y="8.6" width="2.6" height="2.4" fill="#f4f4f4"/><rect x="6.4" y="12.6" width="2.6" height="2.4" fill="#f4f4f4"/><rect x="6.4" y="16.6" width="2.6" height="2.4" fill="#f4f4f4"/><rect x="10.6" y="8.6" width="2.6" height="2.4" fill="#f4f4f4"/><rect x="10.6" y="12.6" width="2.6" height="2.4" fill="#f4f4f4"/><rect x="10.6" y="16.6" width="2.6" height="2.4" fill="#f4f4f4"/><rect x="14.8" y="8.6" width="2.6" height="2.4" fill="#f4f4f4"/><rect x="14.8" y="12.6" width="2.6" height="2.4" fill="#f4f4f4"/><rect x="14.8" y="16.6" width="2.6" height="2.4" fill="#f4f4f4"/><path d="M4.6 0.6 V4.6 M10 0.6 V4.6 M15.4 0.6 V4.6" stroke="#dadada" stroke-width="1.6"/></svg>
<span class="t" style="left:696.70px;top:385.30px;font-size:7.2px;line-height:10px;color:#a4a4a4;transform:scaleX(0.8737);">Календарь</span>
<div style="left:655.30px;top:420.00px;width:116.00px;height:27.00px;border:1.4px solid #1c3f7c;background:#f4f4f4;"></div>
<span class="t" style="left:678.30px;top:428.30px;font-size:8.4px;line-height:11px;color:#1b3c78;transform:scaleX(0.8826);-webkit-text-stroke:0.35px #1b3c78;">Сбор рекомендаций</span>
</div></div>
</body>
</html>
